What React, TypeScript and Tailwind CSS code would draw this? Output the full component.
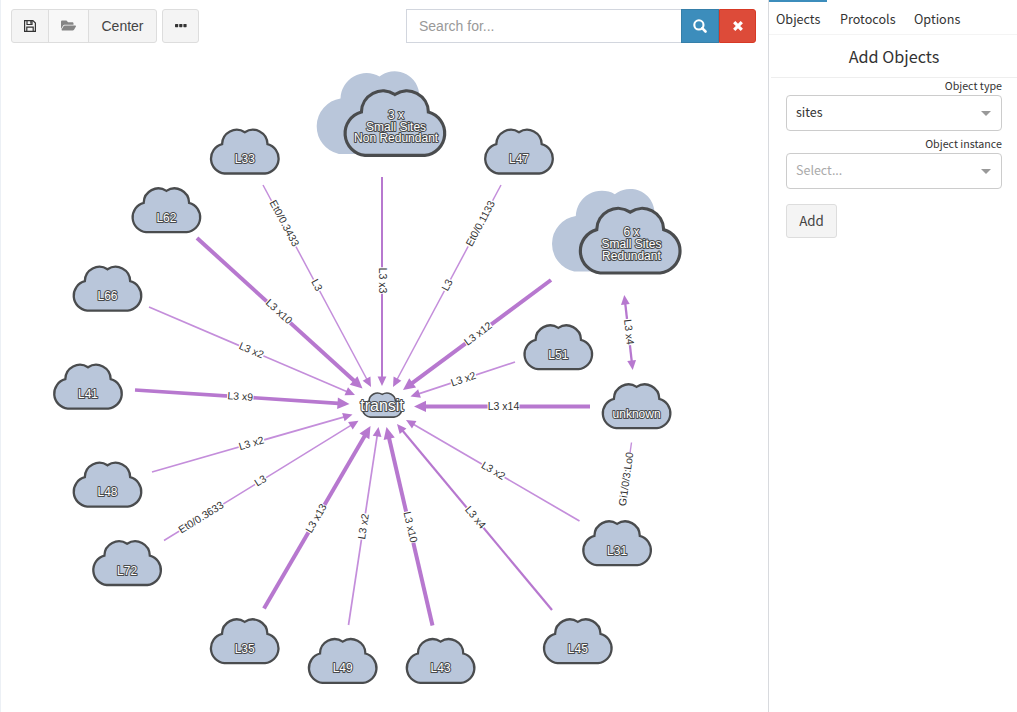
import React from "react";
import { FaFolderOpen } from "react-icons/fa";

type Label = [text: string, x: number, y: number];
type Edge = { from: [number, number]; to: [number, number]; w: number; labels: Label[]; arrows: "none" | "end" | "both" };

const CLOUD =
  "M-20.3 44.2A15 15 0 0 1 -22.7 14.8A14.6 14.6 0 0 1 0 2.9A14.6 14.6 0 0 1 22.7 14.8A15 15 0 0 1 20.3 44.2Z";

const BACK_CLOUD =
  "M-56 63.7A28.2 28.2 0 0 1 -54.4 8.3A26 26 0 0 1 -15.4 -13.6A24.5 24.5 0 0 1 24 1.5L20 63.7Z";

const nodes: [string, number, number][] = [
  ["L33", 244.8, 129.3],
  ["L47", 519, 129.3],
  ["L62", 166.4, 188],
  ["L66", 107.5, 266.4],
  ["L51", 558.3, 325],
  ["L41", 88, 364.4],
  ["unknown", 636.6, 384],
  ["L48", 107.5, 462.4],
  ["L31", 617.1, 521],
  ["L72", 127.1, 540.8],
  ["L35", 244.7, 619],
  ["L45", 577.8, 619],
  ["L49", 342.7, 638.7],
  ["L43", 440.6, 638.7],
];

const edges: Edge[] = [
  { from: [263, 185], to: [371, 387], w: 1.5, labels: [["Et0/0.3433", 284.5, 223.3], ["L3", 317, 285]], arrows: "end" },
  { from: [382, 177], to: [382, 386], w: 2, labels: [["L3 x3", 382.5, 280.5]], arrows: "end" },
  { from: [501, 185], to: [393, 387], w: 1.5, labels: [["Et0/0.1133", 480.3, 223.5], ["L3", 447, 285]], arrows: "end" },
  { from: [197, 238], to: [362.5, 388.5], w: 4, labels: [["L3 x10", 279, 311.5]], arrows: "end" },
  { from: [149, 307], to: [355, 395], w: 1.7, labels: [["L3 x2", 251.4, 350.3]], arrows: "end" },
  { from: [135, 390], to: [349.5, 404], w: 3.7, labels: [["L3 x9", 240.3, 396.4]], arrows: "end" },
  { from: [152, 472], to: [352.5, 414.5], w: 1.7, labels: [["L3 x2", 251.3, 443.2]], arrows: "end" },
  { from: [164, 540.5], to: [358.5, 420.7], w: 1.5, labels: [["Et0/0.3633", 201, 517.3], ["L3", 260.3, 480.6]], arrows: "end" },
  { from: [264, 608.5], to: [370.5, 426], w: 4, labels: [["L3 x13", 316, 518.3]], arrows: "end" },
  { from: [348.5, 625], to: [378.5, 427], w: 1.7, labels: [["L3 x2", 363.3, 526.5]], arrows: "end" },
  { from: [432.5, 625.5], to: [386.5, 427], w: 4, labels: [["L3 x10", 410.6, 527]], arrows: "end" },
  { from: [552, 610], to: [397, 424], w: 2.2, labels: [["L3 x4", 475.5, 517.3]], arrows: "end" },
  { from: [579.5, 521], to: [406, 420], w: 1.7, labels: [["L3 x2", 493.3, 470.5]], arrows: "end" },
  { from: [590, 406.4], to: [414, 406.4], w: 4, labels: [["L3 x14", 503.5, 405.9]], arrows: "end" },
  { from: [515, 362], to: [410.5, 396.5], w: 1.7, labels: [["L3 x2", 463.3, 379]], arrows: "end" },
  { from: [551, 280], to: [403, 390], w: 4, labels: [["L3 x12", 478, 333.6]], arrows: "end" },
  { from: [624.3, 295], to: [632.7, 370], w: 2.3, labels: [["L3 x4", 629, 332]], arrows: "both" },
  { from: [631.5, 442.5], to: [624, 496], w: 1.4, labels: [["Gi1/0/3:Lo0", 626, 479]], arrows: "none" },
];

const labelWidths: Record<string, number> = {
  "Et0/0.3433": 52,
  "Et0/0.1133": 52,
  "Et0/0.3633": 52,
  "Gi1/0/3:Lo0": 52,
  L3: 13,
};

function Outlined({ x, y, size = 12, children }: { x: number; y: number; size?: number; children: string }) {
  return (
    <text
      x={x}
      y={y}
      fontSize={size}
      textAnchor="middle"
      fill="#fff"
      stroke="#484a4c"
      strokeWidth={2}
      strokeLinejoin="round"
      paintOrder="stroke"
    >
      {children}
    </text>
  );
}

function EdgeLine({ edge }: { edge: Edge }) {
  const [x1, y1] = edge.from;
  const [x2, y2] = edge.to;
  const length = Math.hypot(x2 - x1, y2 - y1);
  const angle = (Math.atan2(y2 - y1, x2 - x1) * 180) / Math.PI;
  const textAngle = angle > 90.01 ? angle - 180 : angle < -90.01 ? angle + 180 : angle;
  const head = edge.w > 3 ? 12 : 9.5;
  const half = edge.w > 3 ? 5.7 : 4.4;
  return (
    <g>
      <g transform={`translate(${x1} ${y1}) rotate(${angle})`} fill="#b778cf">
        <path
          d={`M${edge.arrows === "both" ? head - 1 : 0} 0H${edge.arrows === "none" ? length : length - head + 1}`}
          stroke={edge.w < 2 ? "#c48edb" : "#b778cf"}
          strokeWidth={edge.w}
        />
        {edge.arrows !== "none" && <path d={`M${length} 0l${-head} ${-half}v${half * 2}z`} />}
        {edge.arrows === "both" && <path d={`M0 0l${head} ${-half}v${half * 2}z`} />}
      </g>
      {edge.labels.map(([text, x, y]) => {
        const width = labelWidths[text] ?? (text.length > 5 ? 32 : 26.5);
        return (
          <g key={text} transform={`translate(${x} ${y}) rotate(${textAngle})`}>
            <rect x={-width / 2} y={-6} width={width} height={12} fill="#fff" />
            <text y={3.6} fontSize={10.5} textAnchor="middle" fill="#333">
              {text}
            </text>
          </g>
        );
      })}
    </g>
  );
}

function SiteGroup({ x, y, lines }: { x: number; y: number; lines: string[] }) {
  return (
    <g transform={`translate(${x} ${y})`}>
      <path d={BACK_CLOUD} fill="#b9c6da" />
      <path d={CLOUD} transform="scale(1.475)" fill="#b9c6da" stroke="#4a4c4e" strokeWidth={2.15} />
      {lines.map((line, i) => (
        <Outlined key={line} x={1.2} y={28.7 + i * 11.8}>
          {line}
        </Outlined>
      ))}
    </g>
  );
}

function Topology() {
  return (
    <svg width="767" height="652" viewBox="1 60 767 652" className="block" fontFamily="'Liberation Sans', Arial, sans-serif">
      {edges.map((edge, i) => (
        <EdgeLine key={i} edge={edge} />
      ))}
      <SiteGroup x={394.9} y={90.2} lines={["3 x", "Small Sites", "Non Redundant"]} />
      <SiteGroup x={630.2} y={207.8} lines={["6 x", "Small Sites", "Redundant"]} />
      {nodes.map(([name, x, y]) => (
        <g key={name} transform={`translate(${x} ${y})`}>
          <path d={CLOUD} fill="#b9c6da" stroke="#4a4c4e" strokeWidth={2.3} />
          <Outlined x={0} y={33.8}>
            {name}
          </Outlined>
        </g>
      ))}
      <path
        d={CLOUD}
        transform="translate(382.2 392.8) scale(.58 .55)"
        fill="#b9c6da"
        stroke="#4a4c4e"
        strokeWidth={2.8}
      />
      <Outlined x={382} y={410.8} size={16}>
        transit
      </Outlined>
    </svg>
  );
}

function SaveIcon() {
  return (
    <svg width="12" height="12" viewBox="0 0 12 12" fill="none" stroke="#333" strokeWidth="1.2">
      <path d="M.6.6h8.3l2.5 2.5v8.3H.6zM2.8 11.3V7.2h6.4v4.1M3 .7v3.8h5V.7" />
      <path d="M6.3 1h1.2v2.7H6.3z" fill="#333" stroke="none" />
    </svg>
  );
}

function SelectBox({ label, value, muted }: { label: string; value: string; muted?: boolean }) {
  return (
    <div className="h-[58px]">
      <div className="h-[17px] text-right text-[10.7px] leading-[15px] text-[#333]">{label}</div>
      <div className="flex h-9 items-center justify-between rounded border border-[#ccc] pl-[9px] pr-[10px]">
        <span className={muted ? "pb-[2px] text-[12.5px] leading-5 text-[#aaa]" : "pb-[2px] text-[12.5px] leading-5 text-[#333]"}>
          {value}
        </span>
        <svg width="10" height="5" viewBox="0 0 10 5">
          <path d="M0 0h10L5 5z" fill="#999" />
        </svg>
      </div>
    </div>
  );
}

export default function App() {
  return (
    <div className="flex h-[712px] w-[1017px] overflow-hidden bg-white">
      <main className="w-[769px] border-l border-r border-l-[#ecf0f5] border-r-[#d8dade] font-['Liberation_Sans',Arial,sans-serif]">
        <div className="flex h-[60px] items-start pl-[10px] pr-3 pt-[9px]">
          <div className="flex h-[34px] rounded-[3px] border border-[#ddd] bg-[#f4f4f4] text-sm text-[#444]">
            <button className="flex w-[37px] items-center justify-center border-r border-[#ddd]">
              <SaveIcon />
            </button>
            <button className="flex w-[40px] items-center justify-center border-r border-[#ddd] bg-[#f8f8f8] pb-px">
              <FaFolderOpen size={15} color="#858585" />
            </button>
            <button className="w-[67px]">Center</button>
          </div>
          <button className="ml-[5px] flex h-[34px] w-[37px] items-center justify-center rounded-[3px] border border-[#ddd] bg-[#f4f4f4] pb-px">
            <svg width="12" height="4" viewBox="0 0 12 4" fill="#333">
              <rect width="3.2" height="3.2" rx=".6" />
              <rect x="4.2" width="3.2" height="3.2" rx=".6" />
              <rect x="8.4" width="3.2" height="3.2" rx=".6" />
            </svg>
          </button>
          <div className="ml-auto flex h-[34px] w-[350px]">
            <input
              className="min-w-0 flex-1 border border-r-0 border-[#d2d6de] px-3 text-sm outline-none placeholder:text-[#999]"
              placeholder="Search for..."
            />
            <button className="flex w-[38px] items-center justify-center border border-[#367fa9] bg-[#3c8dbc]">
              <svg width="14" height="14" viewBox="0 0 14 14" fill="none" stroke="#fff">
                <circle cx="5.9" cy="5.9" r="4.6" strokeWidth="2.1" />
                <path d="M9.2 9.2l3.3 3.3" strokeWidth="2.6" strokeLinecap="round" />
              </svg>
            </button>
            <button className="flex w-[37px] items-center justify-center rounded-r-[3px] border border-[#d73925] bg-[#dd4b39]">
              <svg width="10" height="10" viewBox="0 0 10 10" stroke="#fff" strokeWidth="3.2">
                <path d="M1.2 1.2l7.6 7.6M8.8 1.2L1.2 8.8" />
              </svg>
            </button>
          </div>
        </div>
        <Topology />
      </main>
      <aside className="min-w-0 flex-1 font-['Noto_Sans_CJK_SC',sans-serif] text-[#333]">
        <nav className="flex h-[35px] border-b border-[#f4f4f4] text-[12.6px] leading-5">
          <a className="w-[58px] border-t-2 border-[#3c8dbc] pl-[7px] pt-[7px]">Objects</a>
          <a className="w-[75px] pl-[13px] pt-[9px]">Protocols</a>
          <a className="pl-3 pt-[9px]">Options</a>
        </nav>
        <h1 className="ml-[2px] flex h-[43px] items-center justify-center border-b border-[#eee] text-[16.2px] leading-6">
          Add Objects
        </h1>
        <div className="pl-[17px] pr-[15px]">
          <SelectBox label="Object type" value="sites" />
          <SelectBox label="Object instance" value="Select..." muted />
          <button className="mt-[10px] h-[34px] w-[51px] rounded-[3px] border border-[#ddd] bg-[#f4f4f4] pb-[2px] text-[13.4px] leading-5 text-[#444]">
            Add
          </button>
        </div>
      </aside>
    </div>
  );
}
